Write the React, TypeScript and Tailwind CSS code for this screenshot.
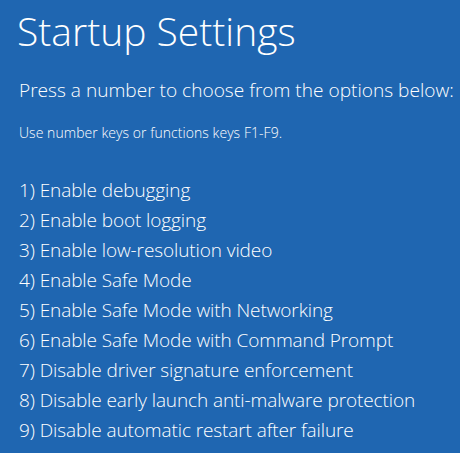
export default function App() {
  const options = [
    "Enable debugging",
    "Enable boot logging",
    "Enable low-resolution video",
    "Enable Safe Mode",
    "Enable Safe Mode with Networking",
    "Enable Safe Mode with Command Prompt",
    "Disable driver signature enforcement",
    "Disable early launch anti-malware protection",
    "Disable automatic restart after failure",
  ];

  return (
    <div className="w-[460px] h-[453px] overflow-hidden bg-[#1f66b1] text-white font-['Open_Sans',sans-serif]">
      <div className="pt-[7px] pl-[17px]">
        <h1 className="text-[39px] leading-[48px] font-light">Startup Settings</h1>
      </div>
      <div className="pl-[19px]">
        <p className="mt-[20px] text-[19.1px] leading-[30px] font-light whitespace-nowrap">
          Press a number to choose from the options below:
        </p>
        <p className="mt-[18px] text-[14px] leading-[20px] font-light tracking-[0.05px]">
          Use number keys or functions keys F1-F9.
        </p>
        <ol className="mt-[32px] flex flex-col">
          {options.map((o, i) => (
            <li key={o} className="text-[19px] leading-[30px] font-light whitespace-nowrap tracking-[-0.1px]">
              {i + 1}) {o}
            </li>
          ))}
        </ol>
      </div>
    </div>
  );
}
